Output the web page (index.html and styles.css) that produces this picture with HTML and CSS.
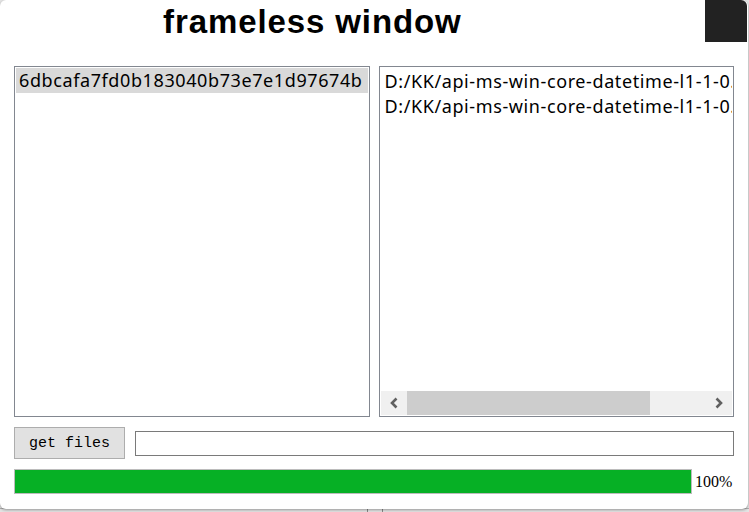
FILE: index.html
```html
<!DOCTYPE html>
<html>
<head>
<meta charset="utf-8">
<link rel="stylesheet" href="styles.css">
</head>
<body>
<div class="window">
  <div class="titlebar">
    <div class="title">frameless window</div>
    <div class="close"></div>
  </div>
  <div class="panes">
    <div class="list">
      <div class="item selected">6dbcafa7fd0b183040b73e7e1d97674b</div>
    </div>
    <div class="list right">
      <div class="scrollarea">
        <div class="item">D:/KK/api-ms-win-core-datetime-l1-1-0.dll</div>
        <div class="item">D:/KK/api-ms-win-core-datetime-l1-1-0.dll</div>
      </div>
      <div class="hscroll">
        <div class="arrow">
          <svg width="14" height="14" viewBox="0 0 14 14"><path d="M9.5 2.5 L5 7 L9.5 11.5" fill="none" stroke="#606060" stroke-width="2.6"/></svg>
        </div>
        <div class="track"><div class="thumb"></div></div>
        <div class="arrow">
          <svg width="14" height="14" viewBox="0 0 14 14"><path d="M4.5 2.5 L9 7 L4.5 11.5" fill="none" stroke="#606060" stroke-width="2.6"/></svg>
        </div>
      </div>
    </div>
  </div>
  <div class="controls">
    <button class="btn">get files</button>
    <div class="input"></div>
  </div>
  <div class="progress">
    <div class="bar"><div class="fill"></div></div>
    <div class="pct">100%</div>
  </div>
</div>
<div class="under">
  <div class="seg a"></div><div class="seg b"></div><div class="seg c"></div>
</div>
</body>
</html>
```
FILE: styles.css
```css
html, body {
  margin: 0;
  padding: 0;
}
body {
  width: 749px;
  height: 512px;
  overflow: hidden;
  background: #e4e4e4;
  position: relative;
}
.window {
  position: relative;
  z-index: 1;
  width: 748px;
  height: 509px;
  background: #fff;
  border-radius: 6px;
  box-shadow: 0 1px 3px rgba(0,0,0,0.35);
  box-sizing: border-box;
  padding: 0 14px 0 14px;
  display: flex;
  flex-direction: column;
}
.titlebar {
  display: flex;
  height: 42px;
  margin-right: -13px;
}
.title {
  font-family: "Liberation Sans", Arial, sans-serif;
  font-weight: bold;
  font-size: 33px;
  letter-spacing: 0.9px;
  line-height: 43px;
  color: #000;
  padding-left: 149px;
  flex: 1;
}
.close {
  width: 42px;
  height: 42px;
  background: #222222;
  border-top-right-radius: 6px;
}
.panes {
  margin-top: 24px;
  display: flex;
  gap: 9px;
  height: 351px;
}
.list {
  width: 356px;
  height: 351px;
  box-sizing: border-box;
  border: 1px solid #828790;
  padding: 1px;
  overflow: hidden;
  display: flex;
  flex-direction: column;
}
.item {
  font-family: "Noto Sans", "Open Sans", sans-serif;
  font-size: 18px;
  letter-spacing: 0.6px;
  line-height: 25px;
  height: 25px;
  padding-left: 3px;
  color: #000;
  white-space: nowrap;
}
.item.selected {
  background: #d9d9d9;
}
.right .item {
  padding-left: 4px;
}
.scrollarea {
  flex: 1;
  overflow: hidden;
  padding-top: 1px;
}
.hscroll {
  height: 24px;
  background: #f0f0f0;
  display: flex;
  align-items: stretch;
}
.arrow {
  width: 26px;
  display: flex;
  align-items: center;
  justify-content: center;
}
.track {
  flex: 1;
  display: flex;
}
.thumb {
  width: 243px;
  background: #cdcdcd;
}
.controls {
  margin-top: 10px;
  display: flex;
  align-items: center;
  gap: 10px;
  height: 32px;
}
.btn {
  width: 111px;
  height: 32px;
  margin: 0;
  background: #e1e1e1;
  border: 1px solid #adadad;
  font-family: "Liberation Mono", "Courier New", monospace;
  font-size: 15px;
  color: #000;
  padding: 0;
}
.input {
  flex: 1;
  height: 25px;
  box-sizing: border-box;
  border: 1px solid #7a7a7a;
  margin-top: 1px;
}
.progress {
  margin-top: 10px;
  display: flex;
  align-items: center;
  height: 25px;
}
.bar {
  width: 678px;
  height: 25px;
  box-sizing: border-box;
  border: 1px solid #bcbcbc;
  background: #e6e6e6;
}
.fill {
  width: 100%;
  height: 100%;
  background: #06b025;
}
.pct {
  font-family: "Liberation Serif", "Times New Roman", serif;
  font-size: 16px;
  margin-left: 3px;
  color: #000;
}
.under {
  position: absolute;
  left: 0;
  right: 0;
  bottom: 0;
  height: 3px;
  display: flex;
  border-top: 1px solid #b0b0b0;
}
.seg.a { width: 367px; border-right: 1px solid #888; }
.seg.b { width: 14px; border-right: 1px solid #888; }
.seg.c { flex: 1; }
```
